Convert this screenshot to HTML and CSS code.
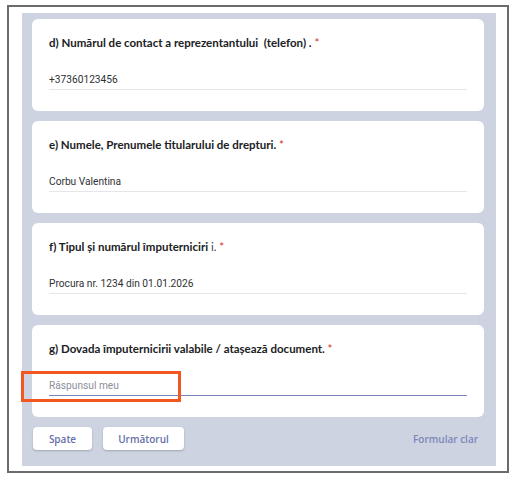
FILE: index.html
```html
<!DOCTYPE html>
<html lang="ro">
<head>
<meta charset="utf-8">
<title>Formular</title>
<link rel="stylesheet" href="styles.css">
</head>
<body>
<div class="frame">
  <div class="sheet">
    <div class="card">
      <div class="q-title">d) Numărul de contact a reprezentantului&nbsp; (telefon) . <span class="req">*</span></div>
      <div class="answer">+37360123456</div>
    </div>
    <div class="card">
      <div class="q-title">e) Numele, Prenumele titularului de drepturi. <span class="req">*</span></div>
      <div class="answer">Corbu Valentina</div>
    </div>
    <div class="card">
      <div class="q-title">f) Tipul și numărul împuterniciri <span class="thin">i.</span> <span class="req">*</span></div>
      <div class="answer">Procura nr. 1234 din 01.01.2026</div>
    </div>
    <div class="card">
      <div class="q-title">g) Dovada împuternicirii valabile / atașează document. <span class="req">*</span></div>
      <div class="answer answer-active"><span class="placeholder">Răspunsul meu</span></div>
      <div class="highlight"></div>
    </div>
    <div class="actions">
      <button class="btn" type="button">Spate</button>
      <button class="btn btn-wide" type="button">Următorul</button>
      <span class="clear">Formular clar</span>
    </div>
  </div>
</div>
</body>
</html>
```

FILE: styles.css
```css
html, body {
  margin: 0;
  padding: 0;
  background: #ffffff;
}

body {
  font-family: Roboto, "Liberation Sans", Arial, sans-serif;
}

.frame {
  margin: 5px 0 0 7px;
  width: 502px;
  height: 468px;
  border: 2px solid #6b6b6b;
  padding: 6px 11px 5px 13px;
  box-sizing: border-box;
}

.sheet {
  background: #cdd3e1;
  height: 100%;
  padding: 6px 12px 0 10px;
  box-sizing: border-box;
  display: flex;
  flex-direction: column;
  gap: 10px;
}

.card {
  position: relative;
  background: #ffffff;
  border-radius: 6px;
  padding: 16px 17px 21px 17px;
}

.q-title {
  font-family: Lato, Roboto, sans-serif;
  font-weight: 700;
  font-size: 11.5px;
  line-height: 15px;
  color: #202124;
  white-space: nowrap;
}

.thin {
  font-weight: 400;
  color: #3c4043;
}

.req {
  color: #d93025;
  font-weight: 400;
}

.answer {
  margin-top: 23px;
  font-size: 10.2px;
  line-height: 14px;
  color: #303134;
  padding-bottom: 2px;
  border-bottom: 1px solid #e6e6ea;
}

.answer-active {
  border-bottom: 1.5px solid #7b84bd;
}

.placeholder {
  color: #8b8f99;
}

.highlight {
  position: absolute;
  left: -11px;
  top: 46px;
  width: 160px;
  height: 31px;
  border: 3px solid #f1571f;
  box-sizing: border-box;
}

.actions {
  display: flex;
  align-items: center;
  gap: 11px;
  padding-left: 1px;
}

.btn {
  height: 23px;
  width: 59px;
  background: #ffffff;
  border: none;
  border-radius: 4px;
  box-shadow: 0 1px 2px rgba(60, 64, 67, 0.3);
  font-family: "Open Sans", Roboto, sans-serif;
  font-size: 10px;
  font-weight: 600;
  color: #6670a8;
  padding: 0;
}

.btn-wide {
  width: 81px;
}

.clear {
  margin-left: auto;
  margin-right: 6px;
  font-family: "Open Sans", Roboto, sans-serif;
  font-size: 10px;
  font-weight: 600;
  color: #7c86b8;
}
```
